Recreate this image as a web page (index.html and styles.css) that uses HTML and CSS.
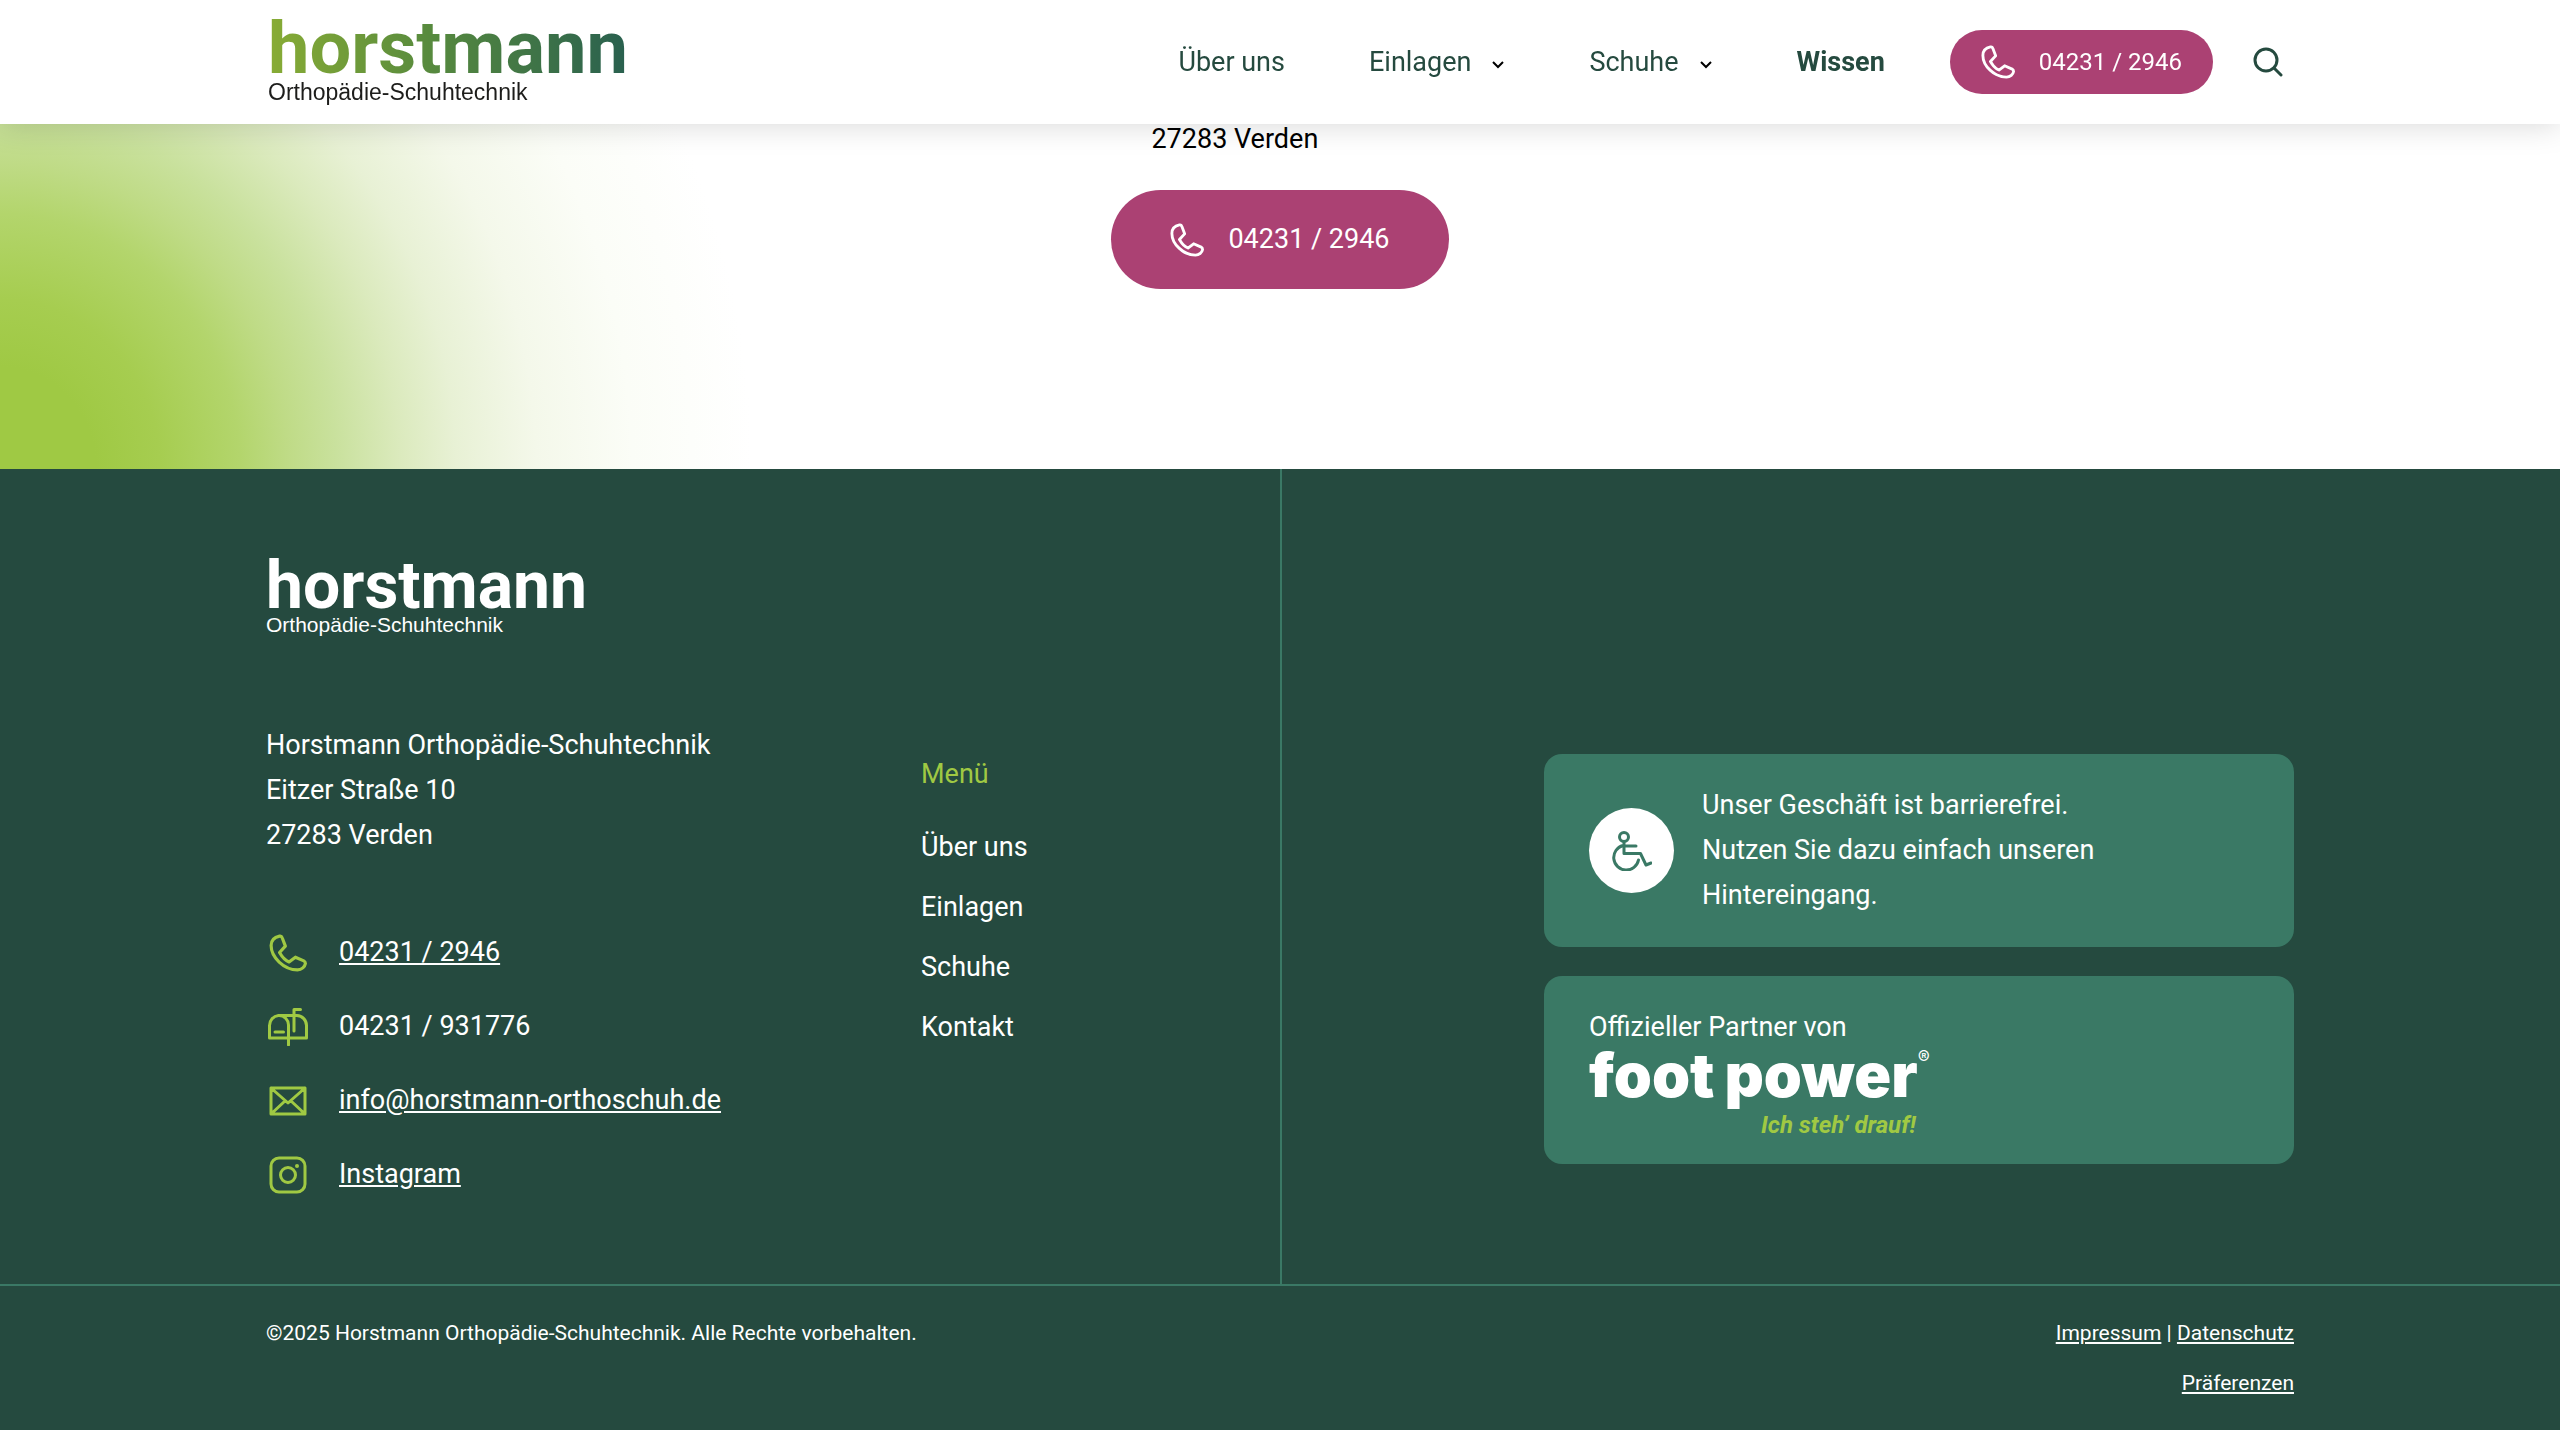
FILE: index.html
```
<!DOCTYPE html>
<html lang="de">
<head>
    <meta charset="UTF-8">
    <meta name="viewport" content="width=device-width, initial-scale=1.0">
    <title>Horstmann Orthopädie-Schuhtechnik</title>
    <link rel="stylesheet" href="styles.css">
</head>
<body>
    <!-- shared icons -->
    <svg class="sprite" aria-hidden="true">
        <symbol id="icon-phone" viewBox="0 0 36 36">
            <path d="M10 2C5 3 2 6 2 11C2 22 14 34 27 34C31 34 34 31 34.500 28C34.500 26.500 34 26 33 25.500L25 22L19 26.500C15 25 12 21 10 17.500L15.500 11.500L12.500 3.500C12 2 11 1.800 10 2Z"/>
        </symbol>
    </svg>

    <header class="header">
        <a href="#" class="logo">
            <span class="logo-name">horstmann</span>
            <span class="logo-sub">Orthopädie-Schuhtechnik</span>
        </a>
        <nav class="nav">
            <a href="#">Über uns</a>
            <a href="#">Einlagen
                <svg class="chevron" viewBox="0 0 14 9"><path d="M2 2l5 5 5-5"/></svg>
            </a>
            <a href="#">Schuhe
                <svg class="chevron" viewBox="0 0 14 9"><path d="M2 2l5 5 5-5"/></svg>
            </a>
            <a href="#" class="active">Wissen</a>
        </nav>
        <a href="tel:042312946" class="btn btn-small">
            <svg class="icon"><use href="#icon-phone"/></svg>
            04231 / 2946
        </a>
        <button class="search" type="button" aria-label="Suche">
            <svg viewBox="0 0 30 30"><circle cx="13" cy="13" r="11"/><path d="M21 21l7 7"/></svg>
        </button>
    </header>

    <main class="location">
        <div class="location-inner">
            <p class="location-city">27283 Verden</p>
            <a href="tel:042312946" class="btn">
                <svg class="icon"><use href="#icon-phone"/></svg>
                04231 / 2946
            </a>
        </div>
    </main>

    <footer class="footer">
        <div class="footer-main">
            <div class="footer-left">
                <a href="#" class="logo logo-light">
                    <span class="logo-name">horstmann</span>
                    <span class="logo-sub">Orthopädie-Schuhtechnik</span>
                </a>
                <div class="footer-columns">
                    <div class="contact">
                        <address>
                            Horstmann Orthopädie-Schuhtechnik<br>
                            Eitzer Straße 10<br>
                            27283 Verden
                        </address>
                        <ul class="contact-list">
                            <li>
                                <svg class="icon"><use href="#icon-phone"/></svg>
                                <a href="tel:042312946">04231 / 2946</a>
                            </li>
                            <li>
                                <svg class="icon" viewBox="0 0 40 38">
                                    <path d="M1.500 30V17.500a10 10 0 0 1 9-10H29a10 10 0 0 1 9.500 10V30Z"/>
                                    <path d="M11 7.500a9.500 9.500 0 0 1 9.500 10V37M26 23V1.500h6.500M7 24h8.500"/>
                                </svg>
                                <span>04231 / 931776</span>
                            </li>
                            <li>
                                <svg class="icon" viewBox="0 0 38 38">
                                    <path d="M2 6h34v26H2zM2 6l17 15L36 6M2 32l14-13M36 32L22 19"/>
                                </svg>
                                <a href="mailto:info@horstmann-orthoschuh.de">info@horstmann-orthoschuh.de</a>
                            </li>
                            <li>
                                <svg class="icon" viewBox="0 0 38 38">
                                    <rect x="2" y="2" width="34" height="34" rx="8"/>
                                    <circle cx="19" cy="19" r="7.500"/>
                                    <circle class="dot" cx="28" cy="10" r="2"/>
                                </svg>
                                <a href="#">Instagram</a>
                            </li>
                        </ul>
                    </div>
                    <nav class="footer-menu">
                        <h2>Menü</h2>
                        <a href="#">Über uns</a>
                        <a href="#">Einlagen</a>
                        <a href="#">Schuhe</a>
                        <a href="#">Kontakt</a>
                    </nav>
                </div>
            </div>

            <div class="footer-right">
                <div class="card card-access">
                    <span class="badge">
                        <svg viewBox="0 0 40 40">
                            <circle cx="12" cy="6" r="4.500"/>
                            <path d="M12 11v11.500h16.500L34 34l5-2M12 15h12M11 14.500A12.500 12.500 0 1 0 26.500 29"/>
                        </svg>
                    </span>
                    <p>Unser Geschäft ist barrierefrei.<br>Nutzen Sie dazu einfach unseren<br>Hintereingang.</p>
                </div>
                <div class="card">
                    <p>Offizieller Partner von</p>
                    <div class="partner">
                        <div class="partner-name"><span>foot</span><span>power</span><small>®</small></div>
                        <div class="partner-claim">Ich steh’ drauf!</div>
                    </div>
                </div>
            </div>
        </div>

        <div class="footer-bottom">
            <p>©2025 Horstmann Orthopädie-Schuhtechnik. Alle Rechte vorbehalten.</p>
            <p class="legal">
                <a href="#">Impressum</a> | <a href="#">Datenschutz</a><br>
                <a href="#">Präferenzen</a>
            </p>
        </div>
    </footer>
</body>
</html>
```
FILE: styles.css
```
:root {
    --dark: #254a3f;
    --green: #3a7965;
    --lime: #a0c943;
    --berry: #ab4173;
    --side: 266px;
}

* {
    box-sizing: border-box;
    margin: 0;
    padding: 0;
}

body {
    font-family: Roboto, "Liberation Sans", sans-serif;
    font-size: 27px;
    line-height: 45px;
    color: #000;
    background: #fff;
}

a {
    color: inherit;
}

.sprite {
    position: absolute;
    width: 0;
    height: 0;
}

.icon {
    width: 36px;
    height: 36px;
    flex: none;
    fill: none;
    stroke: currentColor;
    stroke-width: 3;
    stroke-linejoin: round;
    stroke-linecap: round;
}

/* Header */
.header {
    position: fixed;
    top: 0;
    left: 0;
    right: 0;
    z-index: 10;
    display: flex;
    align-items: center;
    height: 124px;
    padding: 0 var(--side);
    background: #fff;
    color: var(--dark);
    box-shadow: 0 0 30px rgba(0, 0, 0, 0.17);
}

.logo {
    display: flex;
    flex-direction: column;
    align-items: flex-start;
    text-decoration: none;
}

.header .logo {
    padding: 2px 0 0 2px;
}

.logo-name {
    font-size: 74px;
    font-weight: 700;
    line-height: 58px;
    background: linear-gradient(90deg, #88ac35, #578a3e 45%, #29604f);
    -webkit-background-clip: text;
    background-clip: text;
    color: transparent;
}

.logo-sub {
    font-family: "Liberation Sans", Arial, sans-serif;
    font-size: 23px;
    line-height: 30px;
    color: #1d1d1b;
}

.nav {
    display: flex;
    gap: 84px;
    margin-left: auto;
}

.nav a {
    display: flex;
    align-items: center;
    gap: 20px;
    text-decoration: none;
}

.nav .active {
    font-weight: 700;
}

.chevron {
    width: 14px;
    height: 9px;
    margin-top: 4px;
    fill: none;
    stroke: #000;
    stroke-width: 2;
}

.btn {
    display: flex;
    align-items: center;
    gap: 24px;
    padding: 27px 59px;
    border-radius: 50px;
    background: var(--berry);
    color: #fff;
    text-decoration: none;
    white-space: nowrap;
}

.btn .icon {
    width: 34px;
    height: 34px;
}

.btn-small {
    height: 64px;
    margin-left: 65px;
    padding: 0 31px;
    font-size: 24px;
}

.search {
    display: flex;
    margin-left: 29px;
    padding: 11px;
    border: none;
    background: none;
    cursor: pointer;
}

.search svg {
    width: 30px;
    height: 30px;
    fill: none;
    stroke: var(--dark);
    stroke-width: 3;
    stroke-linecap: round;
}

/* Location */
.location {
    display: flex;
    justify-content: center;
    padding: 117px 0 180px;
    background: radial-gradient(ellipse 800px 850px at 0 100%,
        #9fc944 12%, #a6cd50 20%, #b3d56c 30%, #bfdb86 36%,
        #c9e19d 42%, #dbeabd 50%, #e8f1d5 57%, #f4f8ea 67%,
        #fbfdf7 79%, #fff 94%);
}

.location-city {
    margin-bottom: 28px;
    padding-left: 40px;
}

/* Footer */
.footer {
    background: var(--dark);
    color: #fff;
}

.footer-main {
    display: grid;
    grid-template-columns: 1fr 1fr;
}

.footer-left {
    padding: 91px 0 87px var(--side);
}

.logo-light .logo-name {
    font-size: 66px;
    line-height: 52px;
    background: none;
    color: #fff;
}

.logo-light .logo-sub {
    font-size: 21px;
    line-height: 25px;
    color: #fff;
}

.footer-columns {
    display: grid;
    grid-template-columns: 655px 1fr;
    margin-top: 86px;
}

address {
    font-style: normal;
}

.contact-list {
    display: flex;
    flex-direction: column;
    gap: 29px;
    margin-top: 72px;
    list-style: none;
}

.contact-list li {
    display: flex;
    align-items: center;
    gap: 29px;
}

.contact-list .icon {
    width: 44px;
    height: 38px;
    color: var(--lime);
}

.icon .dot {
    fill: currentColor;
    stroke: none;
}

.footer-menu {
    display: flex;
    flex-direction: column;
    align-items: flex-start;
    gap: 15px;
    margin-top: 29px;
}

.footer-menu h2 {
    margin-bottom: 13px;
    font-size: 27px;
    font-weight: 400;
    color: var(--lime);
}

.footer-menu a {
    text-decoration: none;
}

.footer-right {
    display: flex;
    flex-direction: column;
    justify-content: flex-end;
    gap: 29px;
    padding: 91px var(--side) 120px 262px;
    border-left: 2px solid var(--green);
}

.card {
    padding: 29px 45px;
    border-radius: 18px;
    background: var(--green);
}

.card-access {
    display: flex;
    align-items: center;
    gap: 28px;
}

.badge {
    display: flex;
    align-items: center;
    justify-content: center;
    flex: none;
    width: 85px;
    height: 85px;
    border-radius: 50%;
    background: #fff;
}

.badge svg {
    width: 40px;
    height: 40px;
    fill: none;
    stroke: var(--green);
    stroke-width: 3;
    stroke-linecap: round;
    stroke-linejoin: round;
}

.partner {
    width: fit-content;
}

.partner-name {
    display: flex;
    gap: 10px;
    font-family: Inter, Roboto, sans-serif;
    font-size: 61px;
    font-weight: 900;
    line-height: 50px;
}

.partner-name small {
    font-size: 18px;
    font-weight: 400;
    line-height: 16px;
    margin-left: -10px;
}

.partner-claim {
    margin: 15px 14px 0 0;
    font-size: 24px;
    font-style: italic;
    font-weight: 700;
    line-height: 20px;
    text-align: right;
    color: var(--lime);
}

.footer-bottom {
    display: flex;
    justify-content: space-between;
    padding: 22px var(--side);
    border-top: 2px solid var(--green);
    font-size: 21px;
    line-height: 50px;
}

.legal {
    text-align: right;
}
```
